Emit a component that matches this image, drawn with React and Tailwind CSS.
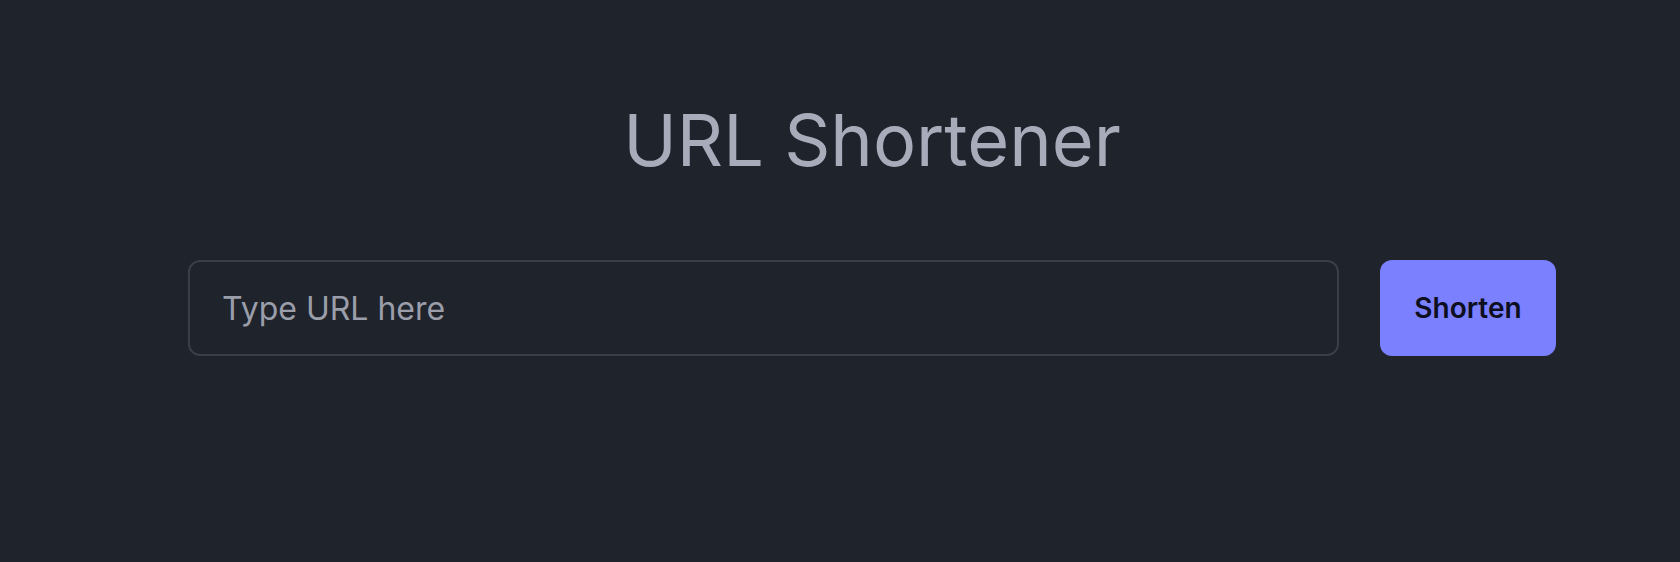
import React from 'react'

export default function App() {
  return (
    <div className="min-h-[562px] w-full bg-[#1f232b] pl-[188px] pr-[124px] pt-[86px]" style={{ fontFamily: 'Inter, "Noto Sans", sans-serif' }}>
      <h1 className="text-center text-[72px] font-normal leading-[108px] text-[#a7acbb]">URL Shortener</h1>
      <div className="mt-[66px] flex items-center gap-[41px]">
        <input
          type="text"
          placeholder="Type URL here"
          className="h-[96px] flex-1 rounded-[12px] border-2 border-[#3a3e48] bg-[#1f232b] px-[32px] text-[32px] text-[#d1d5db] outline-none placeholder:text-[#9a9eaa]"
        />
        <button className="h-[96px] w-[176px] rounded-[12px] bg-[#7b80ff] text-[28px] font-semibold text-[#0d0f1e]">
          Shorten
        </button>
      </div>
    </div>
  )
}
